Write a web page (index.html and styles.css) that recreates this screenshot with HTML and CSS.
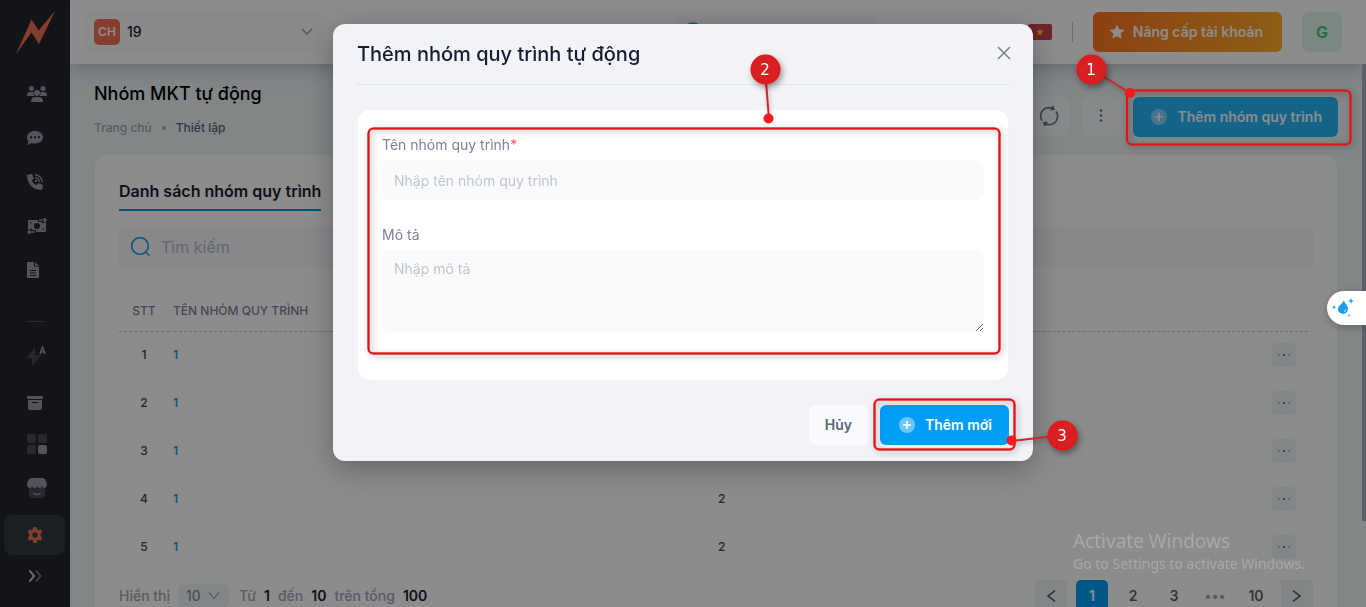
FILE: index.html
```html
<!DOCTYPE html>
<html lang="vi">
<head>
<meta charset="utf-8">
<meta name="viewport" content="width=device-width, initial-scale=1">
<title>Nhóm MKT tự động</title>
<link rel="stylesheet" href="styles.css">
</head>
<body>
<div class="app">
  <nav class="sidebar" aria-label="Menu">
    <a class="logo" href="#" aria-label="Trang chủ"><svg width="40" height="44" viewBox="0 0 40 44"><path d="M0 43 15.500 8.500 22.500 19.500 39 0 23 33 15.500 21.500Z"/></svg></a>
    <a class="nav-item" href="#" aria-label="Khách hàng"><svg width="20" height="16" viewBox="0 0 20 16"><circle cx="4.500" cy="2.500" r="2.500"/><circle cx="16" cy="2.500" r="2.500"/><circle cx="10" cy="7" r="3"/><path d="M0 10c0-3 1-4 3-4h2.500c.7 0 1 .2 1 .8 0 1.300.3 2.200 1 3.200zM20 10c0-3-1-4-3-4h-2.500c-.7 0-1 .2-1 .8 0 1.300-.3 2.200-1 3.200zM4 16c0-3.500 1.500-5 4-5h4c2.500 0 4 1.500 4 5z"/></svg></a>
    <a class="nav-item" href="#" aria-label="Tin nhắn"><svg width="16" height="16" viewBox="0 0 16 16"><path fill-rule="evenodd" d="M8 1c4.400 0 8 2.700 8 6.300s-3.600 6.200-8 6.200c-1.300 0-2.500-.2-3.500-.6C3.200 14 1.700 14.700 0 14.700c1-1 1.500-2 1.600-3.200C.6 10.300 0 8.900 0 7.300 0 3.700 3.600 1 8 1zM3 6.300v2h2v-2zm4 0v2h2v-2zm4 0v2h2v-2z"/></svg></a>
    <a class="nav-item" href="#" aria-label="Cuộc gọi"><svg width="16" height="16" viewBox="0 0 16 16"><path d="M1 .7 4.300 0c.4 0 .8.2 1 .6l1.400 3.300c.2.400 0 .9-.3 1.200L4.800 6.500c1 2.100 2.600 3.700 4.700 4.700l1.400-1.600c.3-.4.8-.5 1.200-.3l3.300 1.400c.4.200.6.600.6 1l-.7 3.300c-.1.500-.5.8-1 .8C6.300 16 0 9.500 0 1.700c0-.5.4-.9 1-1z"/><path class="line" d="M8 .8c4 .2 7 3.200 7.200 7.200M8 3.700c2.500.2 4.200 1.900 4.300 4.300"/><circle cx="9" cy="7" r="1.200"/></svg></a>
    <a class="nav-item" href="#" aria-label="Giao dịch"><svg width="20" height="16" viewBox="0 0 20 16"><path fill-rule="evenodd" d="M2 2h9v2h4v1.500L19 4v9c0 .6-.4 1-1 1H9v-2H5v-1.500L1 12V3c0-.6.4-1 1-1zm8 3a3 3 0 1 0 0 6 3 3 0 0 0 0-6zM3 4v2l2-2zm14 6-2 2h2z"/><path class="line" d="M12 2h7M17 0l2.200 2L17 4M8 14H1M3 12l-2 2 2 2"/></svg></a>
    <a class="nav-item" href="#" aria-label="Tài liệu"><svg width="12" height="16" viewBox="0 0 12 16"><path fill-rule="evenodd" d="M1 0h6v4.500h5V15a1 1 0 0 1-1 1H1a1 1 0 0 1-1-1V1a1 1 0 0 1 1-1zm2 8v1h6V8zm0 2.500v1h6v-1zm0 2.500v1h6v-1z"/><path d="M8 0l4 3.700H8z"/></svg></a>
    <hr class="nav-rule">
    <a class="nav-item" href="#" aria-label="Tự động"><svg width="20" height="20" viewBox="0 0 20 20"><path class="dim" d="M8 1v8h6L5 20v-8H0L8 1z"/><path class="line" d="M13 8l2.500-7L18 8M14 6h3"/></svg></a>
    <a class="nav-item low" href="#" aria-label="Lưu trữ"><svg width="16" height="14" viewBox="0 0 16 14"><rect width="16" height="3" rx="1"/><path fill-rule="evenodd" d="M1 4h14v8a2 2 0 0 1-2 2H3a2 2 0 0 1-2-2zm4 2v1h6V6z"/></svg></a>
    <a class="nav-item" href="#" aria-label="Ứng dụng"><svg width="20" height="20" viewBox="0 0 20 20"><g class="dim"><rect width="9" height="9" rx="2"/><rect x="11" width="9" height="9" rx="2"/><rect y="11" width="9" height="9" rx="2"/></g><rect x="11" y="11" width="9" height="9" rx="2"/></svg></a>
    <a class="nav-item" href="#" aria-label="Cửa hàng"><svg width="20" height="20" viewBox="0 0 20 20"><path class="dim" d="M2 6h16v11a3 3 0 0 1-3 3H5a3 3 0 0 1-3-3z"/><path d="M5 0h10c3 0 3.500 2 5 6 0 5-5 5-5 1 0 4-5 4-5 0 0 4-5 4-5 0 0 4-5 4-5-1C1.500 2 2 0 5 0z"/><path class="line" d="M6.500 15c1 2 6 2 7 0"/></svg></a>
    <a class="nav-item active" href="#" aria-label="Thiết lập" aria-current="page"><svg width="16" height="16" viewBox="0 0 16 16"><path fill-rule="evenodd" d="M6.500 0h3l.5 2.300 1.500.9 2.300-.8 1.500 2.700-1.700 1.700v2.400l1.700 1.700-1.500 2.700-2.300-.8-1.500.9L9.500 16h-3L6 13.700l-1.500-.9-2.300.8-1.500-2.700 1.700-1.700V6.800L.7 5.100l1.500-2.700 2.300.8L6 2.300zM8 5.300a2.700 2.700 0 1 0 0 5.400 2.700 2.700 0 0 0 0-5.400z"/></svg></a>
    <button class="nav-item expand" type="button" aria-label="Mở rộng"><svg width="16" height="12" viewBox="0 0 16 12"><path class="near" d="M2.500.5 7 6l-4.500 5.500"/><path class="far" d="M9 .5 13.500 6 9 11.500"/></svg></button>
  </nav>

  <div class="workspace">
    <header class="topbar">
      <button class="account" type="button"><span class="account-badge">CH</span><span class="account-name">19</span><svg width="12" height="8" viewBox="0 0 12 8"><path d="M1 1l5 5 5-5"/></svg></button>
      <button class="quick-search" type="button" aria-label="Tìm nhanh"><svg width="20" height="20" viewBox="0 0 20 20"><circle cx="10" cy="10" r="9"/></svg></button>
      <div class="top-actions">
        <button class="flag" type="button" aria-label="Tiếng Việt"><svg width="8" height="8" viewBox="0 0 10 10"><path d="M5 0l1.300 3.500H10L7.100 5.900 8.100 9.500 5 7.400 1.900 9.500l1-3.600L0 3.500h3.700z"/></svg></button>
        <span class="separator"></span>
        <button class="btn upgrade" type="button"><svg width="16" height="16" viewBox="0 0 16 16"><path d="M8 .5l2.200 4.700 5.300.7-3.900 3.600 1 5.300L8 12.300l-4.600 2.500 1-5.300L.5 5.900l5.300-.7z"/></svg>Nâng cấp tài khoản</button>
        <button class="avatar" type="button">G</button>
      </div>
    </header>

    <main class="content">
      <div class="page-head">
        <div>
          <h1 class="page-title">Nhóm MKT tự động</h1>
          <div class="crumbs"><a href="#">Trang chủ</a><span class="crumb-dot"></span><span class="crumb-here">Thiết lập</span></div>
        </div>
        <div class="page-actions">
          <button class="icon-btn" type="button" aria-label="Tải lại"><svg width="20" height="22" viewBox="0 0 20 22"><path d="M14.800 3.200A8.300 8.300 0 0 0 3 14.500M5 16.800A8.300 8.300 0 0 0 17 5.500M11.500 3.500l3.300-.3L13.500 0M8.500 16.500 5 16.800 6 20"/></svg></button>
          <button class="icon-btn" type="button" aria-label="Thêm tùy chọn"><svg class="dots" width="4" height="16" viewBox="0 0 4 16"><circle cx="2" cy="1.500" r="1.300"/><circle cx="2" cy="6.500" r="1.300"/><circle cx="2" cy="11.500" r="1.300"/></svg></button>
          <button class="btn add-group" type="button"><svg class="plus" width="16" height="16" viewBox="0 0 16 16"><circle cx="8" cy="8" r="8"/><path d="M4 8h8M8 4v8"/></svg>Thêm nhóm quy trình</button>
        </div>
      </div>

      <section class="card">
        <a class="tab" href="#">Danh sách nhóm quy trình</a>
        <div class="search"><svg width="20" height="20" viewBox="0 0 20 20"><circle cx="9" cy="9" r="8.300"/><path d="M15 15.500l3.500 3"/></svg><input type="search" placeholder="Tìm kiếm" aria-label="Tìm kiếm"></div>
        <table class="groups">
          <thead><tr><th class="col-no">STT</th><th class="col-name">Tên nhóm quy trình</th><th class="col-count"></th><th class="col-menu"></th></tr></thead>
          <tbody>
            <tr><td class="col-no">1</td><td class="col-name"><a href="#">1</a></td><td class="col-count">2</td><td class="col-menu"><button class="row-menu" type="button" aria-label="Thao tác"><i></i><i></i><i></i></button></td></tr>
            <tr><td class="col-no">2</td><td class="col-name"><a href="#">1</a></td><td class="col-count">2</td><td class="col-menu"><button class="row-menu" type="button" aria-label="Thao tác"><i></i><i></i><i></i></button></td></tr>
            <tr><td class="col-no">3</td><td class="col-name"><a href="#">1</a></td><td class="col-count">2</td><td class="col-menu"><button class="row-menu" type="button" aria-label="Thao tác"><i></i><i></i><i></i></button></td></tr>
            <tr><td class="col-no">4</td><td class="col-name"><a href="#">1</a></td><td class="col-count">2</td><td class="col-menu"><button class="row-menu" type="button" aria-label="Thao tác"><i></i><i></i><i></i></button></td></tr>
            <tr><td class="col-no">5</td><td class="col-name"><a href="#">1</a></td><td class="col-count">2</td><td class="col-menu"><button class="row-menu" type="button" aria-label="Thao tác"><i></i><i></i><i></i></button></td></tr>
          </tbody>
        </table>
        <div class="table-foot">
          <div class="page-size">
            <label for="size">Hiển thị</label>
            <span class="select-box"><select id="size"><option>10</option><option>20</option></select><svg width="12" height="8" viewBox="0 0 12 8"><path d="M1 .5l5 6 5-6"/></svg></span>
            <span>Từ</span><b>1</b><span>đến</span><b>10</b><span>trên tổng</span><b>100</b>
          </div>
          <nav class="pager" aria-label="Phân trang">
            <button class="edge" type="button" aria-label="Trang trước"><svg width="10" height="12" viewBox="0 0 10 12"><path d="M9 .5 2 6l7 5.500"/></svg></button>
            <button class="current" type="button">1</button>
            <button type="button">2</button>
            <button type="button">3</button>
            <button class="more" type="button">•••</button>
            <button type="button">10</button>
            <button class="edge square" type="button" aria-label="Trang sau"><svg width="10" height="12" viewBox="0 0 10 12"><path d="M1 .5 8 6l-7 5.500"/></svg></button>
          </nav>
        </div>
      </section>
    </main>
  </div>
  <div class="scroll-thumb"></div>
</div>

<div class="backdrop">
  <form class="dialog" role="dialog" aria-labelledby="dialog-title">
    <div class="dialog-head">
      <h2 id="dialog-title">Thêm nhóm quy trình tự động</h2>
      <button class="close" type="button" aria-label="Đóng"><svg width="14" height="14" viewBox="0 0 14 14"><path d="M1 1l12 12M13 1 1 13"/></svg></button>
    </div>
    <div class="fields">
      <div class="field"><label for="name">Tên nhóm quy trình<span class="required">*</span></label><input id="name" type="text" placeholder="Nhập tên nhóm quy trình"></div>
      <div class="field"><label for="desc">Mô tả</label><textarea id="desc" placeholder="Nhập mô tả"></textarea></div>
    </div>
    <div class="dialog-foot">
      <button class="btn cancel" type="button">Hủy</button>
      <button class="btn submit" type="submit"><svg class="plus" width="16" height="16" viewBox="0 0 16 16"><circle cx="8" cy="8" r="8"/><path d="M4 8h8M8 4v8"/></svg>Thêm mới</button>
    </div>
  </form>
</div>

<div class="helper"><svg width="24" height="22" viewBox="0 0 24 22"><path d="M13 4c0 3 4 5 4 9a5 5 0 0 1-10 0c0-4 5-5 6-9z"/><path d="M20 2l.8 2.200 2.200.8-2.200.8L20 8l-.8-2.200L17 5l2.200-.8zM3 9l.6 1.600 1.600.6-1.600.6L3 13.400l-.6-1.600-1.600-.6 1.600-.6zM18 18l.4 1 1 .6-1 .5-.4 1-.4-1-1-.5 1-.6z"/><path class="shine" d="M13 15.500c1 0 1.800-.8 1.800-2"/></svg></div>
<div class="watermark"><div class="wm-title">Activate Windows</div><div>Go to Settings to activate Windows.</div></div>

<svg class="guide" width="1366" height="607" viewBox="0 0 1366 607">
  <g class="frame-glow"><rect x="1127" y="90.500" width="223.500" height="54" rx="5"/><rect x="368.500" y="128.500" width="631" height="225" rx="5"/><rect x="874.500" y="399.500" width="140" height="50" rx="5"/></g>
  <g class="frame"><rect x="1127" y="90.500" width="223.500" height="54" rx="5"/><rect x="368.500" y="128.500" width="631" height="225" rx="5"/><rect x="874.500" y="399.500" width="140" height="50" rx="5"/></g>
  <g class="leader"><path d="M1091 69l39 24M765 69l4 50M1063 435l-51 6"/></g>
  <g class="tip"><circle cx="1130" cy="93" r="5"/><circle cx="768.500" cy="118.500" r="5"/><circle cx="1011.500" cy="440.500" r="5"/></g>
  <g class="pin"><circle cx="1091.500" cy="69.500" r="14"/><circle cx="765.500" cy="69.500" r="14"/><circle cx="1062.500" cy="435.500" r="14"/></g>
  <g class="pin-no"><text x="1091" y="75">1</text><text x="765" y="75">2</text><text x="1062" y="441">3</text></g>
</svg>
</body>
</html>
```
FILE: styles.css
```css
* { box-sizing: border-box; }
body { margin: 0; font: 14px/20px Inter, "Noto Sans", sans-serif; color: #181c32; background: #edf4f6; overflow: hidden; }
button, input, select, textarea { font: inherit; color: inherit; border: 0; margin: 0; }
button { padding: 0; cursor: pointer; background: none; }
a { color: inherit; text-decoration: none; }
svg { flex: none; display: block; }

.app { display: flex; height: 100vh; overflow: hidden; }

.sidebar { flex: none; width: 70px; background: #24252c; display: flex; flex-direction: column; }
.logo { padding: 11px 0 0 16px; height: 72px; }
.logo svg { fill: #f27252; }
.nav-item { height: 44px; flex: none; padding-left: 27px; display: flex; align-items: center; fill: #9798a8; }
.nav-item .line { fill: none; stroke: #9798a8; stroke-width: 1.5; }
.nav-item .dim { fill: #484a53; }
.nav-item.low { padding-top: 5px; }
.nav-rule { width: 16px; height: 1px; border: 0; background: #50525c; margin: 29px 0 12px 27px; }
.nav-item.active { height: 40px; margin: 5px 5px 0 4px; padding-left: 23px; border-radius: 8px; background: #31393c; fill: #f27252; }
.expand { height: 42px; }
.expand path { fill: none; stroke-width: 1.8; }
.expand .near { stroke: #d8dadd; }
.expand .far { stroke: #777981; }

.workspace { flex: 1; min-width: 0; display: flex; flex-direction: column; }
.topbar { position: relative; flex: none; height: 64px; padding: 0 24px 0 14px; background: #fff; display: flex; align-items: center; box-shadow: 0 4px 18px rgba(70, 70, 80, .32); }
.account { width: 240px; height: 42px; padding: 0 11px 0 10px; border-radius: 8px; background: #fbfbfd; display: flex; align-items: center; gap: 7px; }
.account-badge { width: 26px; height: 26px; line-height: 26px; border-radius: 5px; background: #f27252; color: #fff; font-size: 12px; font-weight: 600; }
.account-name { flex: 1; text-align: left; font-weight: 500; }
.account svg { fill: none; stroke: #9a9ca5; stroke-width: 1.5; }
.quick-search { margin-left: 352px; width: 200px; height: 36px; padding: 0 7px; border-radius: 8px; background: #f9fafc; display: flex; align-items: center; }
.quick-search svg { fill: none; stroke: #219bdc; stroke-width: 1.6; }
.top-actions { margin-left: auto; display: flex; align-items: center; gap: 20px; }
.flag { width: 24px; height: 16px; border-radius: 2px; background: #c9404d; display: grid; place-items: center; }
.flag svg { fill: #ffd500; }
.separator { width: 1px; height: 20px; background: #c9cad3; }
.btn { height: 40px; border-radius: 6px; padding: 0 16px; display: flex; align-items: center; font-weight: 600; white-space: nowrap; }
.upgrade { gap: 8px; padding: 0 19px 0 16px; color: #fff; background: linear-gradient(100deg, #ff741f, #ffad28); }
.upgrade svg { fill: #fff; }
.avatar { width: 40px; height: 40px; border-radius: 8px; background: #dcf8e9; color: #3fc87c; font-size: 16px; font-weight: 600; }

.content { flex: 1; min-height: 0; padding: 18px 28px 0 24px; }
.page-head { display: flex; justify-content: space-between; align-items: flex-start; }
.page-title { margin: 0 0 12px; font-size: 18px; line-height: 24px; font-weight: 500; color: #000; }
.crumbs { display: flex; align-items: center; font-size: 12px; color: #a1a5b7; font-weight: 500; }
.crumb-dot { width: 4px; height: 4px; margin: 0 10px; border-radius: 50%; background: #a1a5b7; }
.crumb-here { color: #5e6278; }
.page-actions { display: flex; gap: 12px; padding-top: 15px; }
.icon-btn { width: 40px; height: 40px; border-radius: 8px; background: #f8f9fb; display: grid; place-items: center; }
.icon-btn svg { fill: none; stroke: #6a6f84; stroke-width: 1.6; }
.icon-btn .dots { fill: #6a6f84; stroke: none; }
.add-group { background: #25b6fa; color: #fff; padding: 0 16px 0 18px; gap: 10px; }
.plus circle { fill: rgba(255, 255, 255, .42); }
.plus path { stroke: #fff; stroke-width: 1.6; fill: none; }

.card { margin: 17px 1px 0; padding: 24px 24px 0; min-height: 500px; border-radius: 12px; background: #fff; }
.tab { display: inline-block; height: 32px; line-height: 24px; border-bottom: 2px solid #0095e8; font-size: 16px; font-weight: 600; vertical-align: top; }
.search { margin-top: 16px; height: 40px; padding-left: 12px; display: flex; align-items: center; gap: 10px; border-radius: 4px; background: #f5f8fa; }
.search svg { fill: none; stroke: #219bdc; stroke-width: 1.6; }
.search input { flex: 1; padding: 0; background: none; outline: 0; font-size: 16px; }
.search input::placeholder { color: #b9bbc4; font-weight: 400; }
.groups { width: calc(100% - 5px); margin-top: 24px; border-collapse: collapse; table-layout: fixed; font-size: 12px; font-weight: 500; }
.groups th { height: 40px; padding: 0; font-size: 12px; font-weight: 500; color: #7e8299; text-transform: uppercase; text-align: left; border-bottom: 1px dashed #c9cad6; }
.groups td { height: 48px; padding: 0; color: #3f4254; }
.groups .col-no { width: 50px; text-align: center; }
.groups .col-name { width: 549px; padding-left: 4px; }
.groups .col-name a { color: #219bdc; font-weight: 600; }
.groups .col-menu { width: 48px; }
.row-menu { width: 24px; height: 24px; margin-left: 12px; border-radius: 4px; background: #eef4f5; display: flex; align-items: center; justify-content: center; gap: 3px; }
.row-menu i { width: 2px; height: 2px; border-radius: 1px; background: #b0b2bf; }
.row-menu i:nth-child(2) { background: #4c4f61; }
.table-foot { display: flex; justify-content: space-between; align-items: flex-start; margin-top: 9px; }
.page-size { display: flex; align-items: center; gap: 8px; padding-top: 4px; color: #a1a5b7; font-weight: 500; }
.page-size b { font-weight: 600; color: #181c32; }
.select-box { display: flex; align-items: center; width: 51px; height: 24px; padding-left: 8px; border-radius: 6px; background: #eef4f5; color: #7e8299; margin-right: 2px; }
.select-box select { appearance: none; background: none; width: 22px; padding: 0; font-weight: 400; }
.select-box svg { fill: none; stroke: #a1a5b7; stroke-width: 1.2; }
.pager { display: flex; gap: 9px; }
.pager button { width: 32px; height: 32px; border-radius: 5px; color: #5e6278; font-weight: 600; display: grid; place-items: center; }
.pager .edge { background: #eef4f5; }
.pager .square { border-radius: 0; }
.pager .edge svg { fill: none; stroke: #5e6278; stroke-width: 1.6; }
.pager .current { background: #009ef7; color: #fff; }
.pager .more { color: #a1a5b7; }
.scroll-thumb { position: absolute; right: 0; top: 64px; width: 4px; height: 457px; background: #adafbd; }

.backdrop { position: fixed; inset: 0; background: rgba(0, 0, 0, .45); display: flex; justify-content: center; align-items: flex-start; padding-top: 24px; }
.dialog { width: 700px; max-width: 100%; padding: 0 24px 16px; border-radius: 12px; background: #f1f3f7; box-shadow: 0 8px 30px rgba(0, 0, 0, .3); }
.dialog-head { height: 61px; border-bottom: 1px solid #e1e3ea; display: flex; align-items: center; justify-content: space-between; }
.dialog-head h2 { margin: 0; font-size: 20px; line-height: 24px; font-weight: 500; }
.close { width: 14px; height: 14px; margin: 0 -2px 2px 0; }
.close svg { stroke: #7b7d88; stroke-width: 1.5; }
.fields { margin: 25px 1px; padding: 25px 24px 48px; border-radius: 12px; background: #fff; display: grid; gap: 25px; }
.field label { display: block; margin-bottom: 5px; color: #7e8299; }
.required { color: #ff5c68; }
.field input, .field textarea { display: block; width: 100%; padding: 0 12px; height: 40px; border-radius: 8px; background: #f9fafc; outline: 0; }
.field textarea { height: 82px; padding: 9px 12px; resize: vertical; }
.field ::placeholder { color: #c3c5cc; }
.dialog-foot { display: flex; justify-content: flex-end; gap: 12px; }
.cancel { background: #f9fafc; color: #5e6278; }
.submit { background: #009ef7; color: #fff; gap: 10px; padding: 0 17px 0 19px; }

.helper { position: fixed; right: 0; top: 291px; width: 39px; height: 34px; padding: 5px 0 0 4px; border-radius: 17px 0 0 17px; background: #fff; box-shadow: 0 2px 8px rgba(0, 0, 0, .25); }
.helper svg { fill: #1e9cec; }
.helper .shine { fill: none; stroke: #fff; }
.watermark { position: fixed; right: 57px; bottom: 33px; width: 236px; font: 14px/20px "Noto Sans", sans-serif; color: rgba(255, 255, 255, .24); white-space: nowrap; }
.wm-title { font-size: 19px; line-height: 26px; }

.guide { position: fixed; left: 0; top: 0; pointer-events: none; }
.frame, .frame-glow, .leader { fill: none; }
.frame { stroke: #e01217; stroke-width: 2; filter: drop-shadow(2px 2px 3px rgba(0, 0, 0, .35)); }
.frame-glow { stroke: rgba(255, 60, 60, .4); stroke-width: 3; }
.leader { stroke: #db2227; stroke-width: 2; filter: drop-shadow(1px 2px 2px rgba(0, 0, 0, .3)); }
.tip { fill: #f5191d; }
.pin { fill: #d81f22; stroke: #e81519; stroke-width: 2; filter: drop-shadow(2px 3px 3px rgba(0, 0, 0, .4)); }
.pin-no text { fill: #fff; font: 15px "DejaVu Sans", sans-serif; text-anchor: middle; }
```
